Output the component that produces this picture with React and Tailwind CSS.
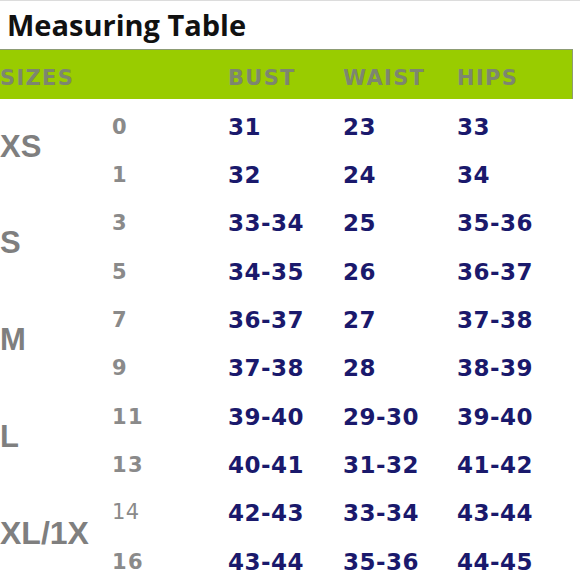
const ROWS = [
  { size: "XS", subs: [["0", "31", "23", "33"], ["1", "32", "24", "34"]] },
  { size: "S", subs: [["3", "33-34", "25", "35-36"], ["5", "34-35", "26", "36-37"]] },
  { size: "M", subs: [["7", "36-37", "27", "37-38"], ["9", "37-38", "28", "38-39"]] },
  { size: "L", subs: [["11", "39-40", "29-30", "39-40"], ["13", "40-41", "31-32", "41-42"]] },
  { size: "XL/1X", subs: [["14", "42-43", "33-34", "43-44"], ["16", "43-44", "35-36", "44-45"]] },
];

const verdana = { fontFamily: "'DejaVu Sans', Verdana, sans-serif" };

export default function App() {
  return (
    <div className="w-[580px] h-[580px] overflow-hidden bg-white relative">
      <div className="h-[1px] bg-[#dcdcdc]" />
      <div className="h-[48px] flex items-center pl-[7px]">
        <h1
          className="text-[29px] font-bold text-[#111] leading-none mt-[-2px]"
          style={{ fontFamily: "'Open Sans', sans-serif" }}
        >
          Measuring Table
        </h1>
      </div>

      <div className="w-[573px] h-[50px] bg-[#99cc00] border-t border-r border-[#8d9c74] grid grid-cols-[228px_115px_114px_1fr] items-center pt-[8px]">
        {["SIZES", "BUST", "WAIST", "HIPS"].map((h) => (
          <span
            key={h}
            className="text-[21px] font-bold text-[#7d8670] leading-none tracking-[1.3px]"
            style={verdana}
          >
            {h}
          </span>
        ))}
      </div>

      <div className="grid grid-cols-[112px_116px_115px_114px_1fr] auto-rows-[48.33px] mt-[4px]">
        {ROWS.map((r) => (
          <div key={r.size} className="contents">
            <div
              className={
                "row-span-2 flex items-center pb-[10px] font-bold text-[#7f7f7f] leading-none " +
                (r.size === "XL/1X" ? "text-[32px]" : "text-[31px]")
              }
              style={{ fontFamily: "'Liberation Sans', Arial, sans-serif" }}
            >
              {r.size}
            </div>
            {r.subs.map((s) => (
              <div key={s[0]} className="contents">
                <div
                  className={
                    "flex items-center leading-none text-[#8a8a8a] " +
                    (s[0] === "14"
                      ? "text-[21px] font-normal pb-[2px] tracking-[0.5px]"
                      : "text-[21px] font-bold tracking-[1.5px]")
                  }
                  style={verdana}
                >
                  {s[0]}
                </div>
                {s.slice(1).map((v, j) => (
                  <div
                    key={j}
                    className="flex items-center text-[23px] font-bold text-[#1a196c] leading-none tracking-[0.5px]"
                    style={verdana}
                  >
                    {v}
                  </div>
                ))}
              </div>
            ))}
          </div>
        ))}
      </div>
    </div>
  );
}
